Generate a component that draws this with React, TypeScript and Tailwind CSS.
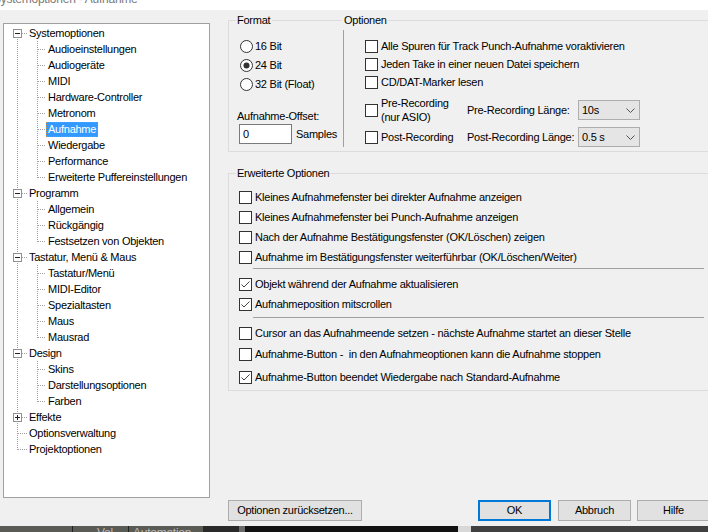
import React from 'react';

type TreeNode = { label: string; box?: 'minus' | 'plus'; children?: string[] };

const TREE: TreeNode[] = [
  {
    label: 'Systemoptionen',
    box: 'minus',
    children: [
      'Audioeinstellungen',
      'Audiogeräte',
      'MIDI',
      'Hardware-Controller',
      'Metronom',
      'Aufnahme',
      'Wiedergabe',
      'Performance',
      'Erweiterte Puffereinstellungen',
    ],
  },
  { label: 'Programm', box: 'minus', children: ['Allgemein', 'Rückgängig', 'Festsetzen von Objekten'] },
  {
    label: 'Tastatur, Menü & Maus',
    box: 'minus',
    children: ['Tastatur/Menü', 'MIDI-Editor', 'Spezialtasten', 'Maus', 'Mausrad'],
  },
  { label: 'Design', box: 'minus', children: ['Skins', 'Darstellungsoptionen', 'Farben'] },
  { label: 'Effekte', box: 'plus' },
  { label: 'Optionsverwaltung' },
  { label: 'Projektoptionen' },
];

const SELECTED = 'Aufnahme';
const DOT = '#a0a0a0';

function RootLines({ first, last, box }: { first: boolean; last: boolean; box?: 'minus' | 'plus' }) {
  return (
    <svg width="23" height="16" className="block shrink-0">
      <line x1="13.5" y1={first ? 8 : 0} x2="13.5" y2={last ? 9 : 16} stroke={DOT} strokeDasharray="1 1" />
      <line x1={box ? 18 : 14} y1="8.5" x2="23" y2="8.5" stroke={DOT} strokeDasharray="1 1" />
      {box && (
        <g>
          <rect x="9.5" y="4.5" width="8" height="8" fill="#fff" stroke="#919191" />
          <line x1="11" y1="8.5" x2="16" y2="8.5" stroke="#222" />
          {box === 'plus' && <line x1="13.5" y1="6" x2="13.5" y2="11" stroke="#222" />}
        </g>
      )}
    </svg>
  );
}

function ChildLines({ lastChild }: { lastChild: boolean }) {
  return (
    <svg width="42" height="16" className="block shrink-0">
      <line x1="13.5" y1="0" x2="13.5" y2="16" stroke={DOT} strokeDasharray="1 1" />
      <line x1="33.5" y1="0" x2="33.5" y2={lastChild ? 9 : 16} stroke={DOT} strokeDasharray="1 1" />
      <line x1="34" y1="8.5" x2="42" y2="8.5" stroke={DOT} strokeDasharray="1 1" />
    </svg>
  );
}

function TreeLabel({ text }: { text: string }) {
  const sel = text === SELECTED;
  return (
    <span
      className={`h-[15px] whitespace-nowrap border px-[1px] leading-[13px] ${
        sel ? 'border-dotted border-[#c98b3a] bg-[#3399ff] text-white' : 'border-transparent'
      }`}
    >
      {text}
    </span>
  );
}

function OptionsTree() {
  return (
    <div className="ml-[3px] mt-[13px] h-[475px] w-[207px] shrink-0 border border-[#a0a0a0] bg-white pt-[1px]">
      {TREE.map((node, i) => (
        <div key={node.label}>
          <div className="flex h-[16px] items-center">
            <RootLines first={i === 0} last={i === TREE.length - 1} box={node.box} />
            <TreeLabel text={node.label} />
          </div>
          {node.children?.map((child, j) => (
            <div key={child} className="flex h-[16px] items-center">
              <ChildLines lastChild={j === node.children!.length - 1} />
              <TreeLabel text={child} />
            </div>
          ))}
        </div>
      ))}
    </div>
  );
}

function CheckBox({ checked }: { checked?: boolean }) {
  return (
    <svg width="13" height="13" viewBox="0 0 13 13" className="block shrink-0">
      <rect x="0.5" y="0.5" width="12" height="12" fill="#fff" stroke="#333" />
      {checked && <path d="M2.5 6.5 L5 9 L10.5 3.5" fill="none" stroke="#444" strokeWidth="1" />}
    </svg>
  );
}

function Radio({ checked }: { checked?: boolean }) {
  return (
    <svg width="13" height="13" viewBox="0 0 13 13" className="block shrink-0">
      <circle cx="6.5" cy="6.5" r="6" fill="#fff" stroke="#333" />
      {checked && <circle cx="6.5" cy="6.5" r="3" fill="#333" />}
    </svg>
  );
}

function Check({ checked, label, className = '' }: { checked?: boolean; label: string; className?: string }) {
  return (
    <div className={`flex items-center ${className}`}>
      <CheckBox checked={checked} />
      <span className="ml-[3px] whitespace-pre">{label}</span>
    </div>
  );
}

function Select({ value }: { value: string }) {
  return (
    <div className="flex h-[20px] w-[62px] shrink-0 items-center justify-between border border-[#adadad] bg-[#e5e5e5] pl-[3px] pr-[4px]">
      <span>{value}</span>
      <svg width="9" height="5" viewBox="0 0 9 5" className="block">
        <path d="M0.5 0.5 L4.5 4.5 L8.5 0.5" fill="none" stroke="#555" />
      </svg>
    </div>
  );
}

function Button({ label, primary, className = '' }: { label: string; primary?: boolean; className?: string }) {
  return (
    <div
      className={`flex h-[21px] items-center justify-center bg-[#e1e1e1] ${
        primary ? 'border-2 border-[#0078d7]' : 'border border-[#adadad]'
      } ${className}`}
    >
      {label}
    </div>
  );
}

function Separator() {
  return <div className="ml-[14px] h-px w-[451px] bg-[#a0a0a0]" />;
}

export default function App() {
  return (
    <div className="flex h-[532px] w-[708px] flex-col overflow-hidden bg-[#f0f0f0] font-['Liberation_Sans',Arial,sans-serif] text-[11px] tracking-[-0.25px] text-black">
      {/* title bar, mostly off screen */}
      <div className="flex h-[10px] shrink-0 justify-between overflow-hidden bg-white text-[12px] leading-[16px] text-[#7a7a7a]">
        <span className="-ml-[7px] -mt-[9px]">Systemoptionen - Aufnahme</span>
        <span className="-mt-[11px] mr-[2px]">✕</span>
      </div>

      <div className="flex h-[516px] shrink-0">
        <OptionsTree />

        <div className="ml-[18px] mt-[4px] flex w-[490px] shrink-0 flex-col pb-[5px]">
          <fieldset className="min-w-0 border border-[#dcdcdc]">
            <legend className="ml-[7px] flex items-center px-[1px] leading-[13px]">
              <span className="flex w-[105px] items-center">
                <span className="pr-[2px]">Format</span>
                <span className="h-px flex-1 bg-[#dcdcdc]" />
              </span>
              <span className="pl-[2px]">Optionen</span>
            </legend>
            <div className="flex">
              <div className="flex w-[114px] flex-col pb-[7px] pl-[8px] pt-[10px]">
                {['16 Bit', '24 Bit', '32 Bit (Float)'].map((b) => (
                  <div key={b} className="ml-[3px] flex h-[19px] items-center">
                    <Radio checked={b === '24 Bit'} />
                    <span className="ml-[2px]">{b}</span>
                  </div>
                ))}
                <div className="mt-[16px] leading-[13px]">Aufnahme-Offset:</div>
                <div className="mt-[1px] flex h-[20px] items-center">
                  <div className="ml-[2px] flex h-[20px] w-[53px] items-center border border-[#7a7a7a] bg-white pl-[3px]">
                    0
                  </div>
                  <span className="ml-[4px]">Samples</span>
                </div>
              </div>
              <div className="mb-[4px] mt-[3px] w-px bg-[#a0a0a0]" />
              <div className="flex flex-1 flex-col pb-[4px] pl-[21px] pt-[10px]">
                <Check className="h-[18px]" label="Alle Spuren für Track Punch-Aufnahme voraktivieren" />
                <Check className="h-[18px]" label="Jeden Take in einer neuen Datei speichern" />
                <Check className="h-[19px]" label="CD/DAT-Marker lesen" />
                <div className="mt-[3px] flex h-[30px] items-center">
                  <div className="flex w-[102px] items-center">
                    <CheckBox />
                    <span className="ml-[3px] leading-[14px]">
                      Pre-Recording
                      <br />
                      (nur ASIO)
                    </span>
                  </div>
                  <span className="w-[111px] whitespace-nowrap">Pre-Recording Länge:</span>
                  <Select value="10s" />
                </div>
                <div className="mt-[2px] flex h-[20px] items-center">
                  <div className="flex w-[102px] items-center">
                    <CheckBox />
                    <span className="ml-[3px] whitespace-nowrap">Post-Recording</span>
                  </div>
                  <span className="w-[111px] whitespace-nowrap">Post-Recording Länge:</span>
                  <Select value="0.5 s" />
                </div>
              </div>
            </div>
          </fieldset>

          <fieldset className="mt-[15px] min-w-0 border border-[#dcdcdc]">
            <legend className="ml-[7px] px-[1px] leading-[13px]">Erweiterte Optionen</legend>
            <div className="flex flex-col pb-[4px] pl-[10px] pt-[8px]">
              <Check className="h-[19px]" label="Kleines Aufnahmefenster bei direkter Aufnahme anzeigen" />
              <Check className="h-[20px]" label="Kleines Aufnahmefenster bei Punch-Aufnahme anzeigen" />
              <Check className="h-[20px]" label="Nach der Aufnahme Bestätigungsfenster (OK/Löschen) zeigen" />
              <Check className="h-[20px]" label="Aufnahme im Bestätigungsfenster weiterführbar (OK/Löschen/Weiter)" />
              <div className="mt-[1px]">
                <Separator />
              </div>
              <Check className="mt-[6px] h-[18px]" checked label="Objekt während der Aufnahme aktualisieren" />
              <Check className="mt-[2px] h-[18px]" checked label="Aufnahmeposition mitscrollen" />
              <div className="mt-[4px]">
                <Separator />
              </div>
              <Check
                className="mt-[6px] h-[18px]"
                label="Cursor an das Aufnahmeende setzen - nächste Aufnahme startet an dieser Stelle"
              />
              <Check
                className="mt-[3px] h-[18px]"
                label="Aufnahme-Button -  in den Aufnahmeoptionen kann die Aufnahme stoppen"
              />
              <Check
                className="mt-[5px] h-[18px]"
                checked
                label="Aufnahme-Button beendet Wiedergabe nach Standard-Aufnahme"
              />
            </div>
          </fieldset>

          <div className="mt-auto flex pr-[8px]">
            <Button className="w-[134px]" label="Optionen zurücksetzen..." />
            <div className="flex-1" />
            <Button className="w-[73px]" primary label="OK" />
            <Button className="ml-[7px] w-[73px]" label="Abbruch" />
            <Button className="ml-[6px] w-[73px]" label="Hilfe" />
          </div>
        </div>
      </div>

      <div className="flex h-[6px] shrink-0 overflow-hidden text-[12px] leading-[14px] text-[#b8b8b8]">
        <div className="w-[72px] bg-[#5b5b55]" />
        <div className="w-px bg-[#222]" />
        <div className="w-[55px] bg-[#5b5b55] pl-[24px]">Vol</div>
        <div className="w-px bg-[#222]" />
        <div className="w-[74px] bg-[#5b5b55] pl-[4px]">Automation</div>
        <div className="w-[36px] bg-[#2a2a2a]" />
        <div className="w-[6px] bg-[#6a6a6a]" />
        <div className="w-[213px] bg-[#121212]" />
        <div className="w-[13px] bg-[#d8d8d8]" />
        <div className="flex-1 bg-[#404040]" />
      </div>
    </div>
  );
}
